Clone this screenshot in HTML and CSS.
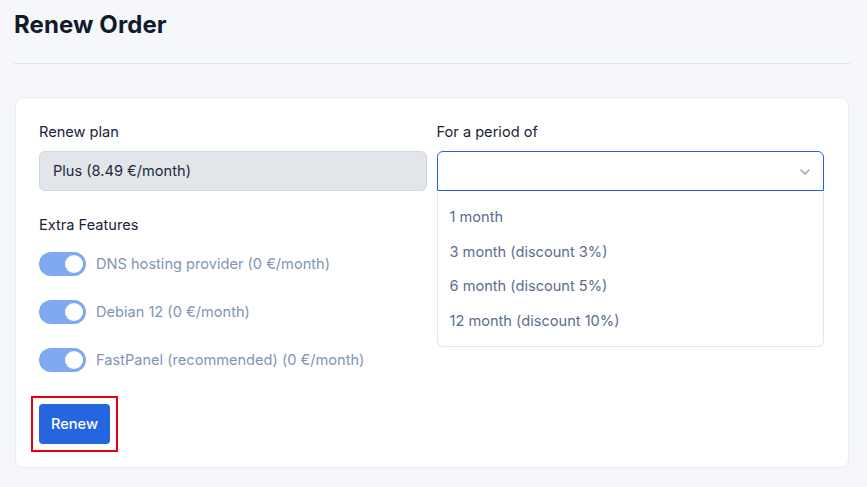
FILE: index.html
```html
<!DOCTYPE html>
<html lang="en">
<head>
  <meta charset="UTF-8" />
  <meta name="viewport" content="width=device-width, initial-scale=1.0" />
  <title>Renew Order</title>
  <link rel="stylesheet" href="styles.css">
</head>
<body>
  <header class="page-head">
    <h1>Renew Order</h1>
  </header>

  <main class="card">
    <div class="form-grid">
      <div class="col">
        <label class="field-label">Renew plan</label>
        <div class="input readonly">Plus (8.49 €/month)</div>

        <div class="field-label extra">Extra Features</div>
        <div class="toggles">
          <label class="toggle-row"><span class="switch"><span class="knob"></span></span>DNS hosting provider (0 €/month)</label>
          <label class="toggle-row"><span class="switch"><span class="knob"></span></span>Debian 12 (0 €/month)</label>
          <label class="toggle-row"><span class="switch"><span class="knob"></span></span>FastPanel (recommended) (0 €/month)</label>
        </div>

        <div class="actions">
          <span class="highlight"><button class="btn-primary">Renew</button></span>
        </div>
      </div>

      <div class="col">
        <label class="field-label">For a period of</label>
        <div class="select-wrap">
          <div class="select open">
            <svg class="chevron" width="10" height="6" viewBox="0 0 10 6"><path d="M1 1l4 4 4-4" fill="none" stroke="#8b9bb8" stroke-width="1.3" stroke-linecap="round" stroke-linejoin="round"/></svg>
          </div>
          <ul class="dropdown">
            <li>1 month</li>
            <li>3 month (discount 3%)</li>
            <li>6 month (discount 5%)</li>
            <li>12 month (discount 10%)</li>
          </ul>
        </div>
      </div>
    </div>
  </main>
</body>
</html>
```

FILE: styles.css
```css
body { margin: 0; padding: 0 17px 0 14px; background: #f5f7fb; font-family: Inter, "Noto Sans", sans-serif; color: #1e293b; }
.page-head { border-bottom: 1px solid #dde4ee; padding: 10px 0 23px; }
.page-head h1 { margin: 0; font-size: 24px; line-height: 30px; font-weight: 700; color: #121a2c; letter-spacing: 0.1px; }

.card { margin: 33px 1px 0; background: #fff; border: 1px solid #e7ecf4; border-radius: 8px; padding: 24px 24px 15px 23px; }
.form-grid { display: grid; grid-template-columns: 1fr 1fr; gap: 10px; }
.col { display: flex; flex-direction: column; }

.field-label { font-size: 14.6px; line-height: 20px; color: #1a2236; margin-bottom: 9px; }
.field-label.extra { margin-top: 24px; margin-bottom: 17px; }

.input { height: 40px; box-sizing: border-box; border: 1px solid #cfd8e5; border-radius: 6px; padding: 0 13px; display: flex; align-items: center; font-size: 14.6px; }
.input.readonly { background: #e2e6ea; color: #1e293b; }

.toggles { display: flex; flex-direction: column; gap: 24px; }
.toggle-row { display: flex; align-items: center; gap: 10px; font-size: 14.6px; line-height: 24px; color: #8194b5; }
.switch { width: 47px; height: 24px; border-radius: 12px; background: #80a9ef; position: relative; flex-shrink: 0; }
.knob { position: absolute; right: 3px; top: 3px; width: 18px; height: 18px; border-radius: 50%; background: #fff; }

.actions { margin-top: 24px; margin-left: -8px; }
.highlight { display: inline-block; border: 2px solid #e8000b; padding: 6px; }
.btn-primary { display: block; background: #2565e0; color: #fff; border: none; border-radius: 4px; font-family: inherit; font-size: 14.6px; font-weight: 500; height: 40px; padding: 0 12px; }

.select-wrap { position: relative; }
.select { height: 40px; box-sizing: border-box; border: 1px solid #2563d8; border-radius: 6px 6px 0 0; position: relative; background: #fff; }
.chevron { position: absolute; right: 13px; top: 17px; }
.dropdown { position: absolute; left: 0; right: 0; top: 40px; margin: 0; padding: 9px 0 8px; list-style: none; background: #fff; border: 1px solid #e2e7ef; border-top: none; border-radius: 0 0 6px 6px; }
.dropdown li { padding: 7px 12px; font-size: 14.6px; line-height: 20.5px; color: #5b6d8f; }
```
